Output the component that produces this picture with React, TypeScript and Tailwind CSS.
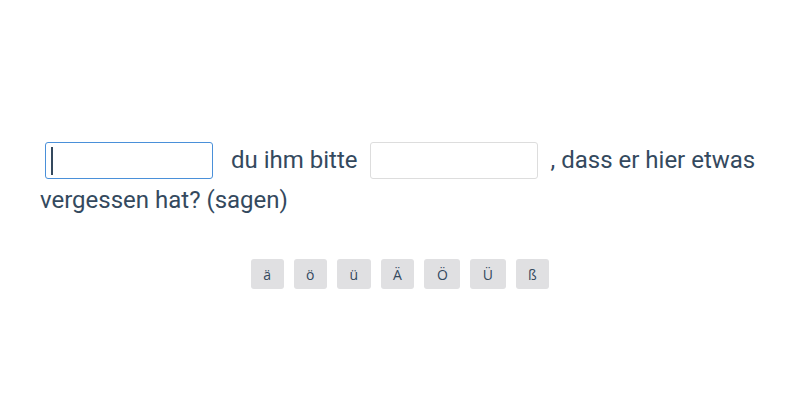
import React from "react";

export default function App() {
  const chars = ["ä", "ö", "ü", "Ä", "Ö", "Ü", "ß"];
  return (
    <div className="w-[800px] h-[400px] bg-white" style={{ fontFamily: "Roboto, sans-serif" }}>
      <div className="pt-[140px] px-[40px] text-[24px] leading-[39px] text-[#34495e]">
        <span className="inline-block align-middle w-[168px] h-[37px] ml-[5px] mr-[18px] rounded-[3px] border border-[#4a90d9] relative">
          <span className="absolute left-[5px] top-[4px] w-[2px] h-[28px] bg-[#34495e]" />
        </span>
        <span className="align-middle">du ihm bitte</span>
        <span className="inline-block align-middle w-[168px] h-[37px] ml-[12px] mr-[13px] rounded-[3px] border border-[#dddddd]" />
        <span className="align-middle">, dass er hier etwas vergessen hat? (sagen)</span>
      </div>
      <div className="mt-[39px] flex justify-center gap-[10px]" style={{ fontFamily: "'Open Sans', sans-serif" }}>
        {chars.map((c) => (
          <div
            key={c}
            className="h-[30px] px-[12.5px] flex items-center justify-center rounded-[3px] bg-[#e0e0e2] text-[14px] text-[#34495e]"
          >
            {c}
          </div>
        ))}
      </div>
    </div>
  );
}
